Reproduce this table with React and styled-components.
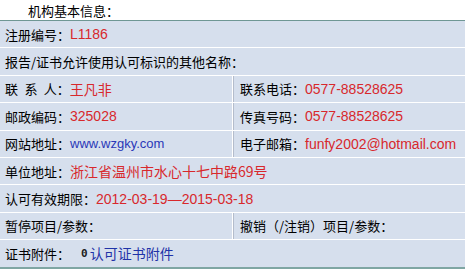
import React from "react";
import styled, { createGlobalStyle } from "styled-components";

const Global = createGlobalStyle`
  html, body { margin: 0; padding: 0; background: #fff; }
  body { font-family: "Liberation Sans", "Noto Sans CJK SC", sans-serif; font-size: 13px; color: #111; }
`;

const Page = styled.div`
  width: 465px;
  height: 272px;
  overflow: hidden;
  background: #fff;
`;

const Title = styled.div`
  height: 20px;
  display: flex;
  align-items: center;
  padding-left: 28px;
  font-family: "Noto Sans CJK SC", sans-serif;
  font-size: 13px;
  color: #000;
`;

const Table = styled.div`
  display: grid;
  grid-template-columns: 232px 1fr;
  grid-auto-rows: 26.4px;
  row-gap: 1px;
  background: #fff;
  border-top: 1px solid #6f9794;
  border-bottom: 2px solid #7fa6a3;
`;

const Cell = styled.div`
  grid-column: ${(p) => (p.$span ? "1 / span 2" : "auto")};
  background: #d6dfed;
  display: flex;
  align-items: center;
  padding-left: ${(p) => (p.$right ? "7px" : "5px")};
  border-left: ${(p) => (p.$right ? "1px solid #fff" : "none")};
  box-shadow: ${(p) => (p.$right ? "inset 1px 0 0 #b4bccb" : "none")};
  white-space: nowrap;
  overflow: hidden;
`;

const Label = styled.span`
  font-family: "Noto Sans CJK SC", sans-serif;
  font-size: 13px;
  word-spacing: 3.5px;
  color: #000;
`;

const Value = styled.span`
  font-family: "Liberation Sans", "Noto Sans CJK SC", sans-serif;
  font-size: ${(p) => p.$size || 14}px;
  color: ${(p) => (p.$blue ? "#2a38b8" : "#d8282c")};
`;

const CnValue = styled.span`
  font-family: "Noto Sans CJK SC", sans-serif;
  font-size: 14px;
  color: #d8282c;
`;

const Zero = styled.span`
  font-family: "DejaVu Sans Mono", monospace;
  font-weight: bold;
  font-size: 11px;
  color: #222;
  margin-left: 11px;
  margin-right: 2px;
`;

const Link = styled.span`
  font-family: "Noto Sans CJK SC", sans-serif;
  font-size: 14px;
  color: #1f33a8;
`;

export default function App() {
  return (
    <Page>
      <Global />
      <Title>机构基本信息：</Title>
      <Table>
        <Cell $span>
          <Label>注册编号：</Label>
          <Value>L1186</Value>
        </Cell>
        <Cell $span>
          <Label>报告/证书允许使用认可标识的其他名称：</Label>
        </Cell>
        <Cell>
          <Label>联 系 人：</Label>
          <CnValue>王凡非</CnValue>
        </Cell>
        <Cell $right>
          <Label>联系电话：</Label>
          <Value>0577-88528625</Value>
        </Cell>
        <Cell>
          <Label>邮政编码：</Label>
          <Value>325028</Value>
        </Cell>
        <Cell $right>
          <Label>传真号码：</Label>
          <Value>0577-88528625</Value>
        </Cell>
        <Cell>
          <Label>网站地址：</Label>
          <Value $blue $size={13}>www.wzgky.com</Value>
        </Cell>
        <Cell $right>
          <Label>电子邮箱：</Label>
          <Value>funfy2002@hotmail.com</Value>
        </Cell>
        <Cell $span>
          <Label>单位地址：</Label>
          <CnValue>浙江省温州市水心十七中路69号</CnValue>
        </Cell>
        <Cell $span>
          <Label>认可有效期限：</Label>
          <Value>2012-03-19—2015-03-18</Value>
        </Cell>
        <Cell>
          <Label>暂停项目/参数：</Label>
        </Cell>
        <Cell $right>
          <Label>撤销（/注销）项目/参数：</Label>
        </Cell>
        <Cell $span>
          <Label>证书附件：</Label>
          <Zero>0</Zero>
          <Link>认可证书附件</Link>
        </Cell>
      </Table>
    </Page>
  );
}
